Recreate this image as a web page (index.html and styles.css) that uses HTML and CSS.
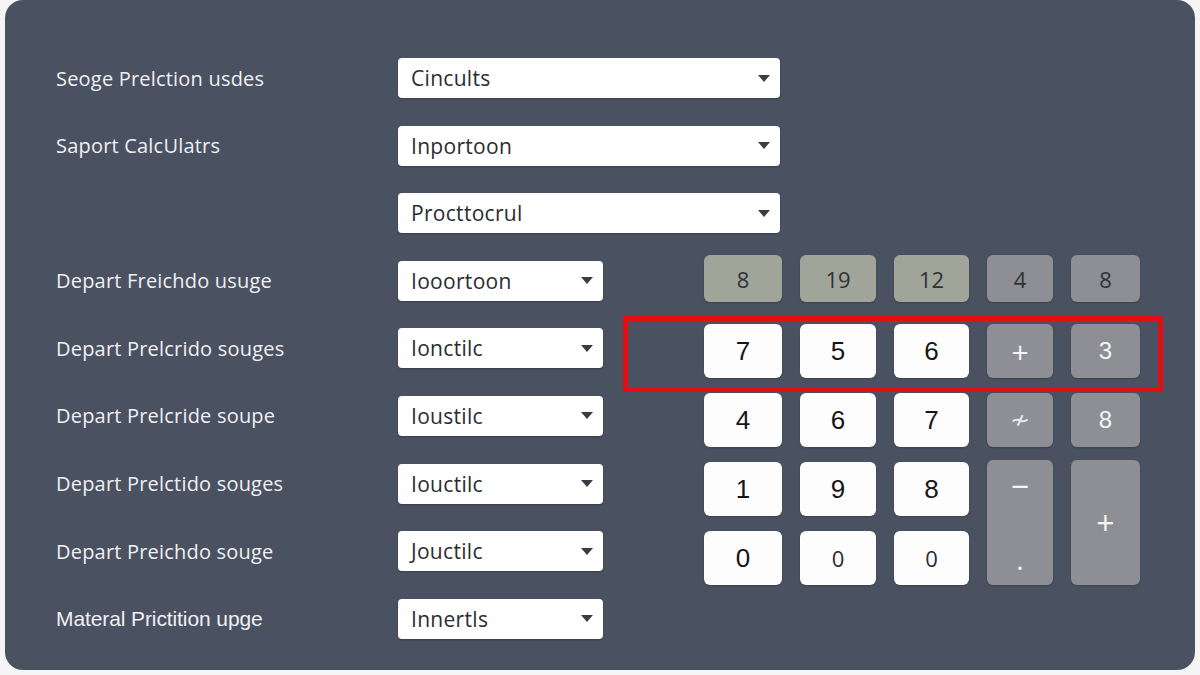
FILE: index.html
```html
<!DOCTYPE html>
<html lang="en">
<head>
<meta charset="UTF-8">
<meta name="viewport" content="width=device-width, initial-scale=1.0">
<title>Calculator Settings</title>
<link rel="stylesheet" href="styles.css">
</head>
<body>

<div class="card">
    <div class="form">
        <div class="row">
            <span class="label">Seoge Prelction usdes</span>
            <div class="select wide"><span>Cincults</span><i class="caret"></i></div>
        </div>
        <div class="row">
            <span class="label">Saport CalcUlatrs</span>
            <div class="select wide"><span>Inportoon</span><i class="caret"></i></div>
        </div>
        <div class="row">
            <span class="label"></span>
            <div class="select wide"><span>Procttocrul</span><i class="caret"></i></div>
        </div>
        <div class="row">
            <span class="label">Depart Freichdo usuge</span>
            <div class="select"><span>Iooortoon</span><i class="caret"></i></div>
        </div>
        <div class="row">
            <span class="label">Depart Prelcrido souges</span>
            <div class="select"><span>Ionctilc</span><i class="caret"></i></div>
        </div>
        <div class="row">
            <span class="label">Depart Prelcride soupe</span>
            <div class="select"><span>Ioustilc</span><i class="caret"></i></div>
        </div>
        <div class="row">
            <span class="label">Depart Prelctido souges</span>
            <div class="select"><span>Iouctilc</span><i class="caret"></i></div>
        </div>
        <div class="row">
            <span class="label">Depart Preichdo souge</span>
            <div class="select"><span>Jouctilc</span><i class="caret"></i></div>
        </div>
        <div class="row">
            <span class="label narrow">Materal Prictition upge</span>
            <div class="select"><span>Innertls</span><i class="caret"></i></div>
        </div>
    </div>

    <div class="keypad">
        <div class="key sage short">8</div>
        <div class="key sage short">19</div>
        <div class="key sage short">12</div>
        <div class="key gray short dark">4</div>
        <div class="key gray short dark">8</div>

        <div class="key">7</div>
        <div class="key">5</div>
        <div class="key">6</div>
        <div class="key gray big">+</div>
        <div class="key gray">3</div>

        <div class="key">4</div>
        <div class="key">6</div>
        <div class="key">7</div>
        <div class="key gray small">&#8769;</div>
        <div class="key gray">8</div>

        <div class="key">1</div>
        <div class="key">9</div>
        <div class="key">8</div>
        <div class="key gray tall minus"><span>&minus;</span><span class="dot">.</span></div>
        <div class="key gray tall">+</div>

        <div class="key">0</div>
        <div class="key light">0</div>
        <div class="key light">0</div>

        <div class="highlight"></div>
    </div>
</div>

</body>
</html>
```

FILE: styles.css
```css
body {
    margin: 0;
    background-color: #f5f5f6;
    font-family: "Open Sans", Arial, sans-serif;
}
.card {
    margin: 0 5px;
    height: 670px;
    background-color: #4a5161;
    border-radius: 18px;
    display: flex;
    box-sizing: border-box;
    padding: 58px 0 0 51px;
}
.form {
    display: flex;
    flex-direction: column;
    gap: 27.6px;
    width: 648px;
    flex-shrink: 0;
}
.row {
    display: flex;
    align-items: center;
    height: 40px;
}
.label {
    width: 342px;
    flex-shrink: 0;
    color: #eef0f3;
    font-size: 20px;
    letter-spacing: 0.2px;
}
.label.narrow {
    font-family: "Liberation Sans", Arial, sans-serif;
    font-size: 21px;
    letter-spacing: -0.1px;
}
.select {
    width: 205px;
    height: 40px;
    flex-shrink: 0;
    background-color: #fff;
    border-radius: 4px;
    box-shadow: 0 1px 2px rgba(0, 0, 0, 0.25);
    display: flex;
    align-items: center;
    justify-content: space-between;
    padding: 0 10px 0 13px;
    box-sizing: border-box;
    font-size: 21px;
    letter-spacing: 0.3px;
    color: #2a2c30;
}
.select.wide {
    width: 382px;
}
.caret {
    width: 0;
    height: 0;
    border-left: 6px solid transparent;
    border-right: 6px solid transparent;
    border-top: 7px solid #3a3d45;
}
.keypad {
    position: relative;
    margin-top: 197px;
    display: grid;
    grid-template-columns: 78px 76px 75px 66px 69px;
    grid-template-rows: 54px 54px 54px 54px 54px;
    column-gap: 18px;
    row-gap: 15px;
    align-self: flex-start;
}
.key {
    background-color: #fdfdfd;
    border-radius: 6px;
    display: flex;
    align-items: center;
    justify-content: center;
    font-family: "Liberation Sans", Arial, sans-serif;
    font-size: 26px;
    color: #151618;
    box-shadow: 0 1px 2px rgba(0, 0, 0, 0.2);
}
.key.light {
    font-family: "Open Sans", Arial, sans-serif;
    font-size: 22px;
    color: #2a2b2e;
}
.key.short {
    height: 47px;
    align-self: start;
    font-family: "Open Sans", Arial, sans-serif;
    font-size: 22px;
    color: #2f3236;
}
.key.sage {
    background-color: #a1a599;
}
.key.gray {
    background-color: #8d8f94;
    color: #f4f4f4;
    font-size: 24px;
}
.key.gray.dark {
    color: #2f3236;
    font-size: 22px;
}
.key.big {
    font-size: 30px;
    font-family: "Open Sans", Arial, sans-serif;
}
.key.small {
    font-size: 24px;
    color: #e8e8e8;
}
.key.tall {
    grid-row: span 2;
    margin-top: -2px;
    font-size: 32px;
    font-family: "Open Sans", Arial, sans-serif;
}
.key.minus {
    flex-direction: column;
    justify-content: space-between;
    padding: 4px 0 12px;
    box-sizing: border-box;
}
.key.minus .dot {
    font-size: 28px;
    line-height: 1;
}
.highlight {
    position: absolute;
    left: -81px;
    top: 61px;
    width: 540px;
    height: 76px;
    border: 5px solid #e30f10;
    border-radius: 2px;
    box-sizing: border-box;
    pointer-events: none;
}
```
